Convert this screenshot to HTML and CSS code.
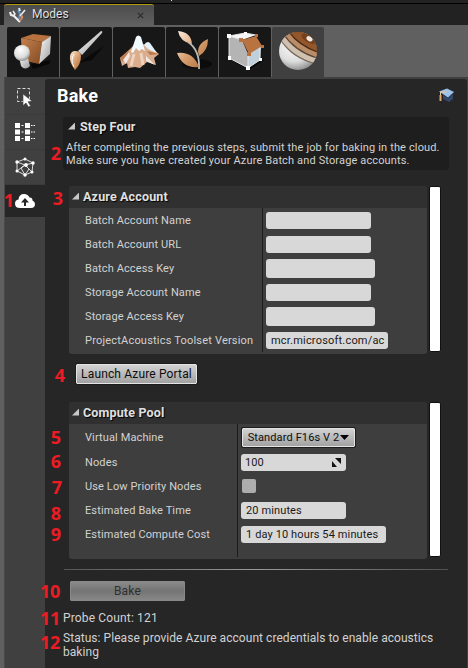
FILE: index.html
```html
<!DOCTYPE html>
<html lang="en">
<head>
<meta charset="utf-8">
<title>Modes</title>
<link rel="stylesheet" href="styles.css">
</head>
<body>
<svg class="defs" width="0" height="0">
  <defs>
    <linearGradient id="copper" x1="0" y1="0" x2="1" y2="1"><stop offset="0" stop-color="#c48250"/><stop offset="1" stop-color="#834a22"/></linearGradient>
    <linearGradient id="leaf" x1="0" y1="0" x2="1" y2="1"><stop offset="0" stop-color="#fff0e2"/><stop offset=".5" stop-color="#d9a071"/><stop offset="1" stop-color="#a96835"/></linearGradient>
    <linearGradient id="silver" x1="0" y1="0" x2="1" y2="1"><stop offset="0" stop-color="#fff"/><stop offset="1" stop-color="#9a9a9a"/></linearGradient>
    <radialGradient id="ball" cx=".4" cy=".3" r=".8"><stop offset="0" stop-color="#fff"/><stop offset=".6" stop-color="#ddd"/><stop offset="1" stop-color="#777"/></radialGradient>
    <clipPath id="sphere"><circle cx="26" cy="24" r="19"/></clipPath>
  </defs>
</svg>
<div class="window">
  <div class="topstrip"><i></i></div>
  <header class="tabbar">
    <div class="tab">
      <svg class="tab-icon" width="18" height="16" viewBox="0 0 18 16">
        <path d="M9 3l2 4-1 5" stroke="#5c8fc4" stroke-width="2" fill="none"/>
        <path d="M10 1l1 3" stroke="#dceaf5" stroke-width="2"/>
        <path d="M1 5l1 3 3 1 6 6" stroke="#eee" stroke-width="2.2" fill="none"/>
        <path d="M4 4l2 3-2 2" stroke="#eee" stroke-width="1.5" fill="none"/>
        <path d="M16 3l-5 6" stroke="#eee" stroke-width="1.6"/>
        <path d="M12 8q3 0 2 3t-4 3q2-2 2-6z" fill="#d28a58"/>
      </svg>
      <span class="tab-name">Modes</span>
      <svg class="close" width="7" height="7" viewBox="0 0 7 7"><path d="M.8.8l5.4 5.4M6.2.8L.8 6.2" stroke="#2c2c2c" stroke-width="1.2"/></svg>
    </div>
  </header>
  <nav class="toolbar">
    <div class="tile"><svg width="52" height="50" viewBox="0 0 52 50">
      <path d="M24 37l20-4-2 4-16 5z" fill="#080808"/>
      <path d="M14 11l12-4 18 2-9 6z" fill="#b9723d"/><path d="M14 11l21 4-3 22-17-4z" fill="url(#copper)"/><path d="M35 15l9-6-1 18-11 10z" fill="url(#silver)"/>
      <path d="M12 29l9 2 2 8q-5 5-9 0z" fill="url(#silver)"/><circle cx="15" cy="26" r="8" fill="url(#ball)"/>
    </svg></div>
    <div class="tile"><svg width="52" height="50" viewBox="0 0 52 50">
      <path d="M18 36l26-17-12 14z" fill="#0a0a0a"/>
      <path d="M41 4q2 0 1 2L22 28l-4-4z" fill="url(#silver)"/>
      <path d="M15 24q6 0 6 5 0 8-6 14-6-8-5-14 1-5 5-5z" fill="url(#leaf)"/>
      <path d="M14 27q-4 6 0 13" stroke="#fff" fill="none"/>
    </svg></div>
    <div class="tile"><svg width="52" height="50" viewBox="0 0 52 50">
      <path d="M7 31l9-8 7-7 12 2 11 9-5 4 2 7-9-3-7 6-5-1-7 1-1-5-5 3z" fill="#d9ad8e"/>
      <path d="M7 31l9-8-2 13-5-2z" fill="#bd7b4e"/><path d="M10 33l6-8 1 4-4 8z" fill="#f0e6e4"/>
      <path d="M34 24l12 3-9 1z" fill="#bd7546"/><path d="M33 29l9 9-9-4z" fill="#eee8e4"/>
      <path d="M18 25l5-15q2-3 5 0l4 14-3-2-3 2-3-3-3 5z" fill="#f1fbff"/>
      <path d="M31 18q3-5 6-2l7 10-5-2-4-2z" fill="#e2f1f8"/>
      <path d="M21 27l-3 12M28 26l2 12" stroke="#efd2bb" stroke-width="3"/>
    </svg></div>
    <div class="tile"><svg width="52" height="50" viewBox="0 0 52 50">
      <ellipse cx="31" cy="37" rx="15" ry="5" fill="#0c0c0c"/>
      <path d="M22 15q12 8 11 27" stroke="#b9bcb9" stroke-width="1.8" fill="none"/>
      <path d="M12 4q13 1 14 13Q14 15 12 4zM42 12q0 12-9 17-4-11 9-17zM11 26q16-2 22 14-16 2-22-14z" fill="url(#leaf)"/>
    </svg></div>
    <div class="tile"><svg width="52" height="50" viewBox="0 0 52 50">
      <path d="M12 33l18 10 15-10-9-2z" fill="#070707"/>
      <path d="M10 9l16-3 11 2-14 5z" fill="#f5f5f5"/><path d="M10 9l13 4 6 14v14L10 31z" fill="#b4b4b4"/><path d="M29 27l13-8-1 14-12 8z" fill="#c0d0da"/>
      <path d="M23 13l14-4 6 10-13 8z" fill="#b87341"/>
      <path d="M10 9l16-3 11 2M10 9l13 4M10 9v22l19 10 12-8V21M29 28v13" stroke="#eee" stroke-width=".9" fill="none"/>
      <path d="M8 7h4v4H8zM25 5h3v3h-3zM9 29h3v4H9zM27 39h4v4h-4zM40 31h3v3h-3z" fill="#fff"/>
      <path d="M20 11h4v4h-4zM36 7h3v3h-3zM42 18h3v3h-3zM28 25h4v4h-4z" fill="#b8713f"/>
    </svg></div>
    <div class="tile active"><svg width="52" height="50" viewBox="0 0 52 50">
      <circle cx="26" cy="24" r="19" fill="url(#ball)"/>
      <g clip-path="url(#sphere)"><g transform="rotate(33 26 24)">
        <path d="M0 0h52v24Q26 35 4 24z" fill="#75695f"/>
        <path d="M0 0h52v23Q26 33 4 23z" fill="#d0c0b0"/>
        <path d="M0 0h52v18Q26 28 4 18z" fill="#5b4433"/>
        <path d="M0 0h52v17Q26 26 4 17z" fill="#b98c6a"/>
        <path d="M0 0h52v12Q26 22 4 12z" fill="#4b2a14"/>
        <path d="M0 0h52v11Q26 20 4 11z" fill="#94572b"/>
        <ellipse cx="28" cy="8" rx="8" ry="3.500" fill="#75401b"/>
        <ellipse cx="29" cy="7.500" rx="3.300" ry="2.300" fill="#eeeae5"/>
      </g></g>
    </svg></div>
  </nav>
  <div class="workspace">
    <aside class="sidebar">
      <div class="side"><svg width="20" height="22" viewBox="0 0 20 22"><path d="M2.500 2.500h12v13h-12z" fill="none" stroke="#ddd" stroke-dasharray="3 2"/><path d="M8 8l9 7-4 .7 2.500 4-2 1.300-2.500-4-3 2.500z" fill="#fff" stroke="#414141" stroke-width=".6"/></svg></div>
      <div class="side"><svg width="20" height="18" viewBox="0 0 20 18"><path d="M0 0h5v5H0zM10 0h5v5h-5zM0 6.500h5v5H0zM10 6.500h5v5h-5zM0 13h5v5H0zM10 13h5v5h-5z" fill="#fff"/><path d="M6.500 2.500h2M16 2.500h1.500M18.500 2.500H20M6.500 9h2M16 9h1.500M18.500 9H20M6.500 15.500h2M16 15.500h1.500M18.500 15.500H20" stroke="#fff" stroke-width="1.200"/></svg></div>
      <div class="side"><svg width="20" height="20" viewBox="0 0 20 20"><path d="M2 5l8-3 8 4-1 9-7 3-8-4zM2 5l8 3 8-2M10 8l4 4-4 6M10 8l-8 6M14 12l3 3M10 8l-4 3 4 7" fill="none" stroke="#eee" stroke-width=".9"/><g fill="#fff"><circle cx="2" cy="5" r="1.700"/><circle cx="10" cy="2" r="1.500"/><circle cx="18" cy="6" r="1.700"/><circle cx="17" cy="15" r="1.500"/><circle cx="10" cy="18" r="1.700"/><circle cx="2" cy="14" r="1.500"/><circle cx="11" cy="8" r="1.900"/></g></svg></div>
      <div class="side selected"><svg width="20" height="14" viewBox="0 0 20 14"><path d="M5 14Q0 14 0 9.500 0 6 3.500 5.500 4 0 9 0q4 0 5.500 3.500 3-.2 3 3Q20 7.500 20 10q0 4-4 4z" fill="#fff"/><path d="M10 4L6 8.500h3V12h2V8.500h3z" fill="#262626"/></svg></div>
    </aside>
    <main class="content">
      <div class="heading">
        <h1>Bake</h1>
        <svg width="18" height="17" viewBox="0 0 18 17"><path d="M5 8l5 3 5-4v5l-4 3-6-3z" fill="#33486b"/><path d="M1 4.500L9 1.500l7 3.500-6 5.500z" fill="#9cc3ec"/><path d="M9 5L2.500 5V9" fill="none" stroke="#e8c69c"/><path d="M1.500 8h2v6h-2z" fill="#d8a875"/></svg>
      </div>
      <section class="step">
        <h2><i class="tri"></i><span class="t-step">Step Four</span></h2>
        <p><span class="l1">After completing the previous steps, submit the job for baking in the cloud.</span><br><span class="l2">Make sure you have created your Azure Batch and Storage accounts.</span></p>
      </section>
      <div class="group azure">
        <section class="panel">
          <h2><i class="tri"></i><span>Azure Account</span></h2>
          <div class="rows">
            <div class="row"><label>Batch Account Name</label><div class="cell"><span class="input"></span></div></div>
            <div class="row"><label>Batch Account URL</label><div class="cell"><span class="input"></span></div></div>
            <div class="row"><label>Batch Access Key</label><div class="cell"><span class="input key"></span></div></div>
            <div class="row"><label>Storage Account Name</label><div class="cell"><span class="input"></span></div></div>
            <div class="row"><label>Storage Access Key</label><div class="cell"><span class="input key"></span></div></div>
            <div class="row"><label class="wide">ProjectAcoustics Toolset Version</label><div class="cell"><span class="input version">mcr.microsoft.com/ac</span></div></div>
          </div>
        </section>
        <div class="scroll"></div>
      </div>
      <div class="button launch">Launch Azure Portal</div>
      <div class="group compute">
        <section class="panel">
          <h2><i class="tri"></i><span>Compute Pool</span></h2>
          <div class="rows">
            <div class="row vm"><label>Virtual Machine</label><div class="cell"><span class="button select">Standard F16s V 2<svg width="9" height="5" viewBox="0 0 9 5"><path d="M0 0h9L4.500 5z"/></svg></span></div></div>
            <div class="row"><label>Nodes</label><div class="cell"><span class="input nodes">100<svg width="9" height="9" viewBox="0 0 9 9"><path d="M3 0h6v6zM0 3v6h5z" fill="#111"/></svg></span></div></div>
            <div class="row"><label>Use Low Priority Nodes</label><div class="cell"><span class="check"></span></div></div>
            <div class="row"><label>Estimated Bake Time</label><div class="cell"><span class="input">20 minutes</span></div></div>
            <div class="row"><label>Estimated Compute Cost</label><div class="cell"><span class="input cost">1 day 10 hours 54 minutes</span></div></div>
          </div>
        </section>
        <div class="scroll"></div>
      </div>
      <div class="rule"></div>
      <div class="button bake">Bake</div>
      <p class="probe">Probe Count: 121</p>
      <p class="status">Status: Please provide Azure account credentials to enable acoustics<br>baking</p>
    </main>
  </div>
  <b class="mark m1">1</b><b class="mark m2">2</b><b class="mark m3">3</b><b class="mark m4">4</b><b class="mark m5">5</b><b class="mark m6">6</b><b class="mark m7">7</b><b class="mark m8">8</b><b class="mark m9">9</b><b class="mark m10">10</b><b class="mark m11">11</b><b class="mark m12">12</b>
</div>
</body>
</html>
```
FILE: styles.css
```css
* { box-sizing: border-box; }
body { margin: 0; background: #262626; font-family: Roboto, "Liberation Sans", sans-serif; }
h1, h2, p { margin: 0; }
svg { display: block; flex: none; }
.defs { position: absolute; }
.window { position: relative; width: 468px; height: 668px; overflow: hidden; display: flex; flex-direction: column; color: #d2d2d2; }
.topstrip { height: 4px; flex: none; background: #222; border-bottom: 1px solid #000; }
.topstrip i { display: block; width: 1px; height: 1px; margin-left: 171px; background: #ddd; }
.tabbar { height: 21px; flex: none; padding-left: 4px; background: #222; }
.tab { width: 150px; height: 21px; display: flex; align-items: center; padding: 0 10px 0 5px; border-radius: 3px 3px 0 0; border-top: 1px solid #b49a0e; background: linear-gradient(#4c4c4c, #606060); }
.tab-name { margin: -2px auto 0 5px; font-size: 12px; color: #e0e0e0; text-shadow: 1px 1px 1px #000; }
.toolbar { height: 52px; flex: none; display: flex; gap: 1px; padding: 2px 0 0 7px; background: #606060; }
.tile { width: 52px; height: 50px; border-radius: 2px 2px 0 0; background: #171717; }
.tile.active { background: #404040; }
.workspace { flex: 1; min-height: 0; display: flex; background: #404040; border-left: 4px solid #606060; }
.sidebar { width: 41px; flex: none; padding-top: 3px; border-left: 1px solid #4a4a4a; }
.side { height: 35px; display: flex; align-items: center; justify-content: center; border-bottom: 1px solid #3b3b3b; }
.side.selected { height: 32px; background: #262626; border: 0; }
.content { width: 422px; margin-top: 2px; border-radius: 3px 3px 0 0; background: #262626; }
.heading { height: 38px; display: flex; justify-content: space-between; padding: 8px 11px 0 12px; }
h1 { font-size: 18px; line-height: 18px; letter-spacing: .2px; color: #fff; }
.step { width: 386px; height: 53px; margin-left: 18px; padding: 0 0 0 3px; background: #1e1e1e; border-radius: 3px; }
h2 { display: flex; align-items: center; font-size: 12.5px; letter-spacing: .15px; color: #e0e0e0; text-shadow: 1px 1px 1px #000; }
.tri { width: 7px; height: 7px; margin-right: 4px; background: #c8c8c8; clip-path: polygon(100% 0, 100% 100%, 0 100%); }
.step h2 { height: 18px; padding-left: 2px; }
.step .tri { margin-right: 5px; }
.step p { padding-top: 6px; font-size: 11px; line-height: 13px; letter-spacing: .14px; white-space: nowrap; }
.l2 { letter-spacing: .14px; }
.group { display: flex; margin-left: 24px; gap: 2px; }
.azure { height: 168px; margin-top: 16px; --split: 193px; }
.compute { height: 157px; margin-top: 18px; --split: 168px; }
.panel { width: 358px; height: 100%; background: #3e3e3e; border-radius: 3px; overflow: hidden; }
.panel h2 { height: 22px; padding: 0 0 2px 3px; background: #303030; }
.rows { background: linear-gradient(#1b1b1b, #1b1b1b) var(--split) 0 / 1px 100% no-repeat; }
.azure .rows { height: 144px; }
.compute .rows { height: 133px; }
.row { height: 24px; display: grid; grid-template-columns: var(--split) 1fr; align-items: center; }
.row.vm { height: 26px; }
.row label { padding-left: 16px; font-size: 11px; letter-spacing: .12px; white-space: nowrap; }
.row label.wide { letter-spacing: .2px; }
.cell { padding-left: 4px; }
.scroll { width: 12px; height: calc(100% - 2px); border: 1px solid #111; border-radius: 2px; background: #fff; }
.input { display: flex; align-items: center; width: 105px; height: 17px; padding: 0 5px; border-radius: 3px; background: #d8d8d8; color: #191919; font-size: 11px; letter-spacing: .12px; white-space: nowrap; }
.input.key { width: 109px; height: 19px; }
.input.version { width: 122px; letter-spacing: .2px; }
.input.cost { width: 145px; }
.input.nodes { justify-content: space-between; padding-left: 4px; }
.check { display: block; width: 14px; height: 14px; margin-left: 1px; border-radius: 2px; background: #adadad; }
.button { display: flex; align-items: center; justify-content: center; border: 1px solid #e4e4e4; outline: 1px solid #1c1c1c; border-radius: 1px; background: linear-gradient(#d2d2d2, #a2a2a2); color: #0d0d0d; white-space: nowrap; }
.launch { width: 121px; height: 20px; margin: 10px 0 0 31px; font-size: 12px; letter-spacing: .15px; }
.select { width: 113px; height: 19px; margin-left: 1px; gap: 1px; font-size: 11px; letter-spacing: .12px; }
.rule { width: 384px; height: 1px; margin: 10px 0 0 19px; background: linear-gradient(90deg, #555, #999 50%, #505050); }
.bake { width: 115px; height: 20px; margin: 11px 0 0 25px; border-color: #888; outline: 0; background: linear-gradient(#8a8a8a, #747474 50%, #878787); color: #303030; font-size: 12px; letter-spacing: .2px; }
.probe, .status { padding-left: 18px; font-size: 12px; line-height: 14px; letter-spacing: .05px; white-space: nowrap; }
.probe { padding-top: 10px; letter-spacing: .15px; }
.status { padding-top: 6px; }
.mark { position: absolute; width: 30px; text-align: center; font: bold 18px/18px "Open Sans", sans-serif; color: #ed1c24; }
.m1 { left: -6px; top: 191px; }
.m2 { left: 41px; top: 144px; }
.m3 { left: 43px; top: 189px; }
.m4 { left: 45px; top: 366px; }
.m5 { left: 41px; top: 428px; }
.m6 { left: 41px; top: 452px; }
.m7 { left: 42px; top: 478px; }
.m8 { left: 41px; top: 504px; }
.m9 { left: 41px; top: 525px; }
.m10 { left: 35px; top: 582px; }
.m11 { left: 35px; top: 609px; }
.m12 { left: 35px; top: 633px; }
.m10, .m11, .m12 { letter-spacing: -.4px; }
```
